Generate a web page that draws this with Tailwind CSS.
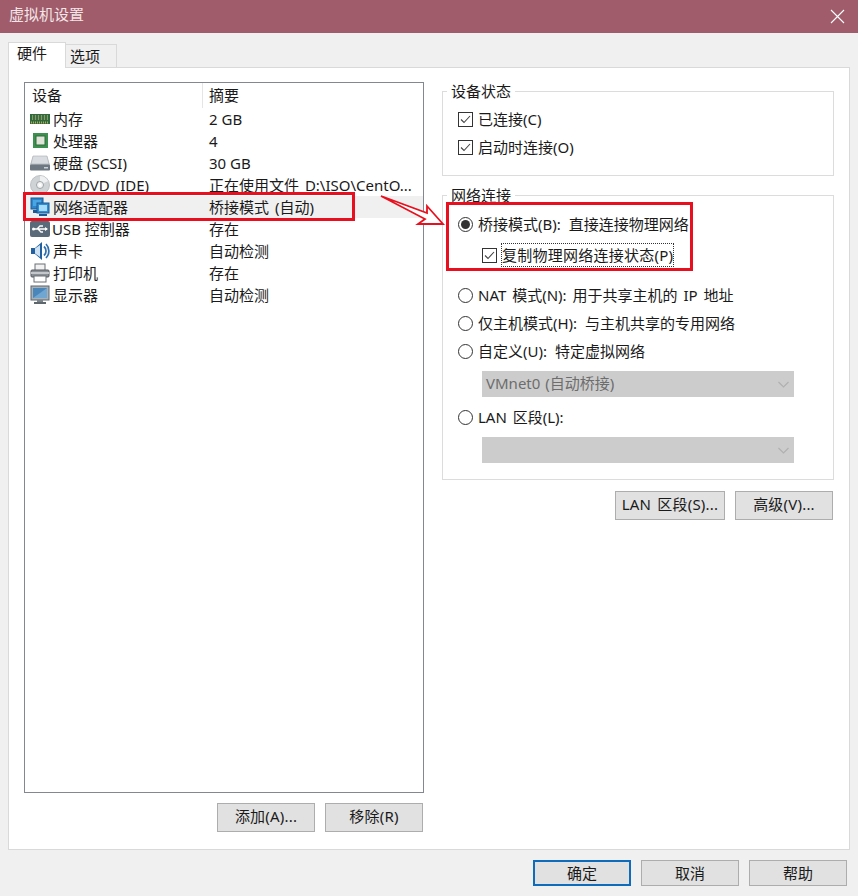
<!DOCTYPE html>
<html lang="zh-CN">
  <head>
    <meta charset="utf-8" />
    <title>虚拟机设置</title>
    <script src="https://cdn.jsdelivr.net/npm/@tailwindcss/browser@4"></script>
  </head>
  <body class="relative w-[858px] h-[896px] overflow-hidden bg-[#f0f0f0] text-[15px] leading-[22px] text-[#1a1a1a] font-['Noto_Sans','Noto_Sans_CJK_SC',sans-serif]">
    <!-- Title bar -->
    <header class="h-[33px] bg-[#a05c6a] flex items-center justify-between pl-[9px] pr-[13px] text-[#f3e6e9]">
      <span class="pb-[5px]">虚拟机设置</span>
      <svg width="15" height="15" viewBox="0 0 15 15" fill="none" stroke="#ffffff" stroke-width="1.1"><path d="M1 1l13 13M14 1L1 14" /></svg>
    </header>

    <!-- Tabs -->
    <div class="h-[34px] pl-[8px] flex items-end">
      <div class="relative z-10 -mb-px w-[58px] h-[26px] bg-white border border-b-0 border-[#d9d9d9] pl-[8px] leading-[21px]">硬件</div>
      <div class="w-[51px] h-[23px] bg-[#f0f0f0] border border-l-0 border-b-0 border-[#d9d9d9] pl-[4px] leading-[23px]">选项</div>
    </div>

    <!-- Panel -->
    <main class="ml-[8px] w-[842px] h-[783px] bg-white border border-[#d9d9d9] pl-[15px] pt-[14px] flex gap-[18px]">
      <!-- Left column -->
      <section class="w-[400px] flex flex-col">
        <div class="h-[711px] border border-[#828790] bg-white">
          <div class="h-[25px] flex leading-[25px]">
            <div class="w-[178px] pl-[7px] border-r border-[#e5e5e5]">设备</div>
            <div class="pl-[6px]">摘要</div>
          </div>

          <div class="h-[22px] flex items-center">
            <div class="w-[179px] flex items-center pl-[5px] gap-[3px]">
              <svg width="20" height="20" viewBox="0 0 20 20"><rect x="0" y="5" width="20" height="10" fill="#2f6b3a" /><rect x="2" y="6" width="16" height="5" fill="#7da06a" /><path d="M4 6v5M7 6v5M10 6v5M13 6v5M16 6v5" stroke="#274f2c" stroke-width="1.300" /><path d="M1 13.500h18" stroke="#b9a85c" stroke-dasharray="1 1" stroke-width="2" /></svg>
              <span>内存</span>
            </div>
            <div class="pl-[5px]">2 GB</div>
          </div>

          <div class="h-[22px] flex items-center">
            <div class="w-[179px] flex items-center pl-[5px] gap-[3px]">
              <svg width="20" height="20" viewBox="0 0 20 20"><rect x="3" y="2" width="15" height="15" fill="#3d9150" /><rect x="6" y="5" width="9" height="9" fill="#dfe4d8" stroke="#2f6a38" /></svg>
              <span>处理器</span>
            </div>
            <div class="pl-[5px]">4</div>
          </div>

          <div class="h-[22px] flex items-center">
            <div class="w-[179px] flex items-center pl-[5px] gap-[3px]">
              <svg width="20" height="20" viewBox="0 0 20 20"><path d="M3 3h14l3 9v5H0v-5z" fill="#c4c8cc" /><path d="M3 3h14l2 8H1z" fill="#d9dde1" stroke="#a6abb0" stroke-width=".6" /><rect x="0" y="11.500" width="20" height="6" rx="1" fill="#6d7782" /><rect x="14" y="14" width="4" height="1.500" fill="#c9d0d6" /></svg>
              <span>硬盘 (SCSI)</span>
            </div>
            <div class="pl-[5px]">30 GB</div>
          </div>

          <div class="h-[22px] flex items-center">
            <div class="w-[179px] flex items-center pl-[5px] gap-[3px]">
              <svg width="20" height="20" viewBox="0 0 20 20"><circle cx="10" cy="10" r="9.500" fill="#d0d3d6" stroke="#b2b6ba" stroke-width=".8" /><path d="M10 1a9 9 0 0 1 8 5l-6 3a2.500 2.500 0 0 0-2-1z" fill="#eef0f2" /><circle cx="10" cy="10" r="3.500" fill="#f4f4f4" stroke="#9da2a6" /><circle cx="10" cy="10" r="1.200" fill="#ffffff" /></svg>
              <span class="whitespace-nowrap [word-spacing:2px]">CD/DVD (IDE)</span>
            </div>
            <div class="pl-[5px] w-[210px] whitespace-nowrap overflow-hidden [word-spacing:2px]">正在使用文件 D:\ISO\CentO...</div>
          </div>

          <div class="h-[22px] flex items-center bg-[#f0f0f0]">
            <div class="w-[179px] flex items-center pl-[5px] gap-[3px]">
              <svg width="20" height="20" viewBox="0 0 20 20"><rect x="1" y="1" width="12" height="11" fill="#2e86cc" stroke="#1d5a95" /><rect x="3" y="3" width="8" height="6" fill="#4aa6e2" /><path d="M3 13h8v3H3z" fill="#1d5a95" /><rect x="7" y="6" width="12" height="10" fill="#2f8fd6" stroke="#1d5a95" /><rect x="9" y="8" width="8" height="6" fill="#a8dbf7" /><path d="M9 17h8v2H9z" fill="#1d5a95" /></svg>
              <span>网络适配器</span>
            </div>
            <div class="pl-[5px] [word-spacing:2px]">桥接模式 (自动)</div>
          </div>

          <div class="h-[22px] flex items-center">
            <div class="w-[179px] flex items-center pl-[5px] gap-[3px]">
              <svg width="20" height="20" viewBox="0 0 20 20"><rect x="0" y="2" width="20" height="16" rx="2" fill="#5a6a78" /><path d="M3 10h14M7 10l3-3h3M8 10l3 3h2" stroke="#ffffff" stroke-width="1.300" fill="none" /><circle cx="3.500" cy="10" r="1.500" fill="#ffffff" /><path d="M15 8l3 2-3 2z" fill="#ffffff" /></svg>
              <span class="whitespace-nowrap -ml-px">USB 控制器</span>
            </div>
            <div class="pl-[5px]">存在</div>
          </div>

          <div class="h-[22px] flex items-center">
            <div class="w-[179px] flex items-center pl-[5px] gap-[3px]">
              <svg width="20" height="20" viewBox="0 0 20 20"><path d="M1 7h4l7-6v18l-7-6H1z" fill="#23609f" /><path d="M5 7.500l5-3.500v12l-5-3.500z" fill="#cfe2f3" /><path d="M14 5.500a6 6 0 0 1 0 9M16 3a10 10 0 0 1 0 14" fill="none" stroke="#2f6fb0" stroke-width="1.700" /></svg>
              <span>声卡</span>
            </div>
            <div class="pl-[5px]">自动检测</div>
          </div>

          <div class="h-[22px] flex items-center">
            <div class="w-[179px] flex items-center pl-[5px] gap-[3px]">
              <svg width="20" height="20" viewBox="0 0 20 20"><rect x="5" y="1" width="10" height="7" fill="#f2f2f2" stroke="#6b7075" /><rect x="1" y="7" width="18" height="7" rx="1" fill="#8b9096" stroke="#555a60" /><rect x="1" y="9" width="18" height="2" fill="#c4c8cc" /><rect x="4" y="13" width="12" height="6" fill="#ffffff" stroke="#6b7075" /></svg>
              <span>打印机</span>
            </div>
            <div class="pl-[5px]">存在</div>
          </div>

          <div class="h-[22px] flex items-center">
            <div class="w-[179px] flex items-center pl-[5px] gap-[3px]">
              <svg width="20" height="20" viewBox="0 0 20 20"><rect x="1" y="1" width="18" height="14" fill="#a8b0b8" stroke="#5e666e" /><rect x="3" y="3" width="14" height="10" fill="#4a86ba" /><path d="M3 13l14-10v10z" fill="#6fa6d2" /><rect x="7" y="15" width="6" height="2" fill="#7b838b" /><rect x="4" y="17" width="12" height="2" fill="#5e666e" /></svg>
              <span>显示器</span>
            </div>
            <div class="pl-[5px]">自动检测</div>
          </div>
        </div>

        <div class="mt-[10px] pr-px flex justify-end gap-[10px]">
          <button class="w-[98px] h-[29px] pb-[3px] bg-[#e1e1e1] border border-[#adadad] tracking-[0.2px]">添加(A)...</button>
          <button class="w-[98px] h-[29px] pb-[3px] bg-[#e1e1e1] border border-[#adadad] tracking-[0.2px]">移除(R)</button>
        </div>
      </section>

      <!-- Right column -->
      <section class="w-[392px] pt-[9px] flex flex-col">
        <div class="relative h-[85px] border border-[#dcdcdc] pt-[16px] pl-[15px] flex flex-col gap-[6px]">
          <span class="absolute left-[4px] -top-[12px] bg-white px-[4px]">设备状态</span>
          <label class="flex items-center gap-[5px]">
            <svg width="15" height="15" viewBox="0 0 15 15"><rect x=".5" y=".5" width="14" height="14" fill="#fff" stroke="#333" /><path d="M3 7.500l3 3 6-6.500" fill="none" stroke="#444" stroke-width="1.100" /></svg>
            已连接(C)
          </label>
          <label class="flex items-center gap-[5px]">
            <svg width="15" height="15" viewBox="0 0 15 15"><rect x=".5" y=".5" width="14" height="14" fill="#fff" stroke="#333" /><path d="M3 7.500l3 3 6-6.500" fill="none" stroke="#444" stroke-width="1.100" /></svg>
            启动时连接(O)
          </label>
        </div>

        <div class="relative mt-[19px] h-[285px] border border-[#dcdcdc] pl-[15px] pr-[39px] pt-[17px] flex flex-col">
          <span class="absolute left-[4px] -top-[12px] bg-white px-[4px]">网络连接</span>

          <label class="h-[22px] flex items-center gap-[5px] [word-spacing:4px]">
            <svg width="15" height="15" viewBox="0 0 15 15"><circle cx="7.500" cy="7.500" r="7" fill="#fff" stroke="#333" /><circle cx="7.500" cy="7.500" r="4.500" fill="#333" /></svg>
            <span>桥接模式(B): 直接连接物理网络</span>
          </label>
          <label class="mt-[9px] ml-[24px] h-[22px] flex items-center gap-[5px]">
            <svg width="15" height="15" viewBox="0 0 15 15"><rect x=".5" y=".5" width="14" height="14" fill="#fff" stroke="#333" /><path d="M3 7.500l3 3 6-6.500" fill="none" stroke="#444" stroke-width="1.100" /></svg>
            <span class="outline-1 outline-dotted outline-[#333] tracking-[0.25px]">复制物理网络连接状态(P)</span>
          </label>

          <label class="mt-[18px] h-[22px] flex items-center gap-[5px] [word-spacing:2px]">
            <svg width="15" height="15" viewBox="0 0 15 15"><circle cx="7.500" cy="7.500" r="7" fill="#fff" stroke="#333" /></svg>
            <span>NAT 模式(N): 用于共享主机的 IP 地址</span>
          </label>
          <label class="mt-[6px] h-[22px] flex items-center gap-[5px] [word-spacing:4px]">
            <svg width="15" height="15" viewBox="0 0 15 15"><circle cx="7.500" cy="7.500" r="7" fill="#fff" stroke="#333" /></svg>
            <span>仅主机模式(H): 与主机共享的专用网络</span>
          </label>
          <label class="mt-[6px] h-[22px] flex items-center gap-[5px] [word-spacing:4px]">
            <svg width="15" height="15" viewBox="0 0 15 15"><circle cx="7.500" cy="7.500" r="7" fill="#fff" stroke="#333" /></svg>
            <span>自定义(U): 特定虚拟网络</span>
          </label>
          <div class="mt-[9px] ml-[24px] h-[26px] bg-[#cccccc] flex items-center justify-between pl-[4px] pr-[5px] text-[#6d6d6d]">
            <span class="pb-[2px] [word-spacing:1px]">VMnet0 (自动桥接)</span>
            <svg width="11" height="7" viewBox="0 0 11 7" fill="none" stroke="#b0b0b0" stroke-width="1.200"><path d="M.5 1l5 5 5-5" /></svg>
          </div>
          <label class="mt-[9px] h-[22px] flex items-center gap-[5px] [word-spacing:2px]">
            <svg width="15" height="15" viewBox="0 0 15 15"><circle cx="7.500" cy="7.500" r="7" fill="#fff" stroke="#333" /></svg>
            <span>LAN 区段(L):</span>
          </label>
          <div class="mt-[9px] ml-[24px] h-[26px] bg-[#cccccc] flex items-center justify-end pr-[5px]">
            <svg width="11" height="7" viewBox="0 0 11 7" fill="none" stroke="#b0b0b0" stroke-width="1.200"><path d="M.5 1l5 5 5-5" /></svg>
          </div>
        </div>

        <div class="mt-[11px] pr-px flex justify-end gap-[10px]">
          <button class="w-[110px] h-[29px] pb-[3px] bg-[#e1e1e1] border border-[#adadad] whitespace-nowrap [word-spacing:2px] tracking-[0.2px]">LAN 区段(S)...</button>
          <button class="w-[98px] h-[29px] pb-[3px] bg-[#e1e1e1] border border-[#adadad] tracking-[0.2px]">高级(V)...</button>
        </div>
      </section>
    </main>

    <!-- Dialog buttons -->
    <footer class="mt-[10px] pr-[11px] flex justify-end gap-[10px]">
      <button class="w-[98px] h-[26px] bg-[#e1e1e1] border-2 border-[#0f6cbd]">确定</button>
      <button class="w-[98px] h-[26px] bg-[#e1e1e1] border border-[#adadad]">取消</button>
      <button class="w-[98px] h-[26px] bg-[#e1e1e1] border border-[#adadad]">帮助</button>
    </footer>

    <!-- Red annotations -->
    <div class="absolute left-[23px] top-[192px] w-[332px] h-[29px] border-[3px] border-[#e8101e] pointer-events-none"></div>
    <div class="absolute left-[446px] top-[202px] w-[247px] h-[69px] border-[3px] border-[#e8101e] pointer-events-none"></div>
    <svg class="absolute left-[378px] top-[192px] pointer-events-none" width="70" height="36" viewBox="0 0 70 36" fill="none" stroke="#e8101e" stroke-width="1.800">
      <path d="M3 4L49 21L49 14L65 32L40 32L47 27Z" fill="#ffffff" stroke-linejoin="miter" />
    </svg>
  </body>
</html>
